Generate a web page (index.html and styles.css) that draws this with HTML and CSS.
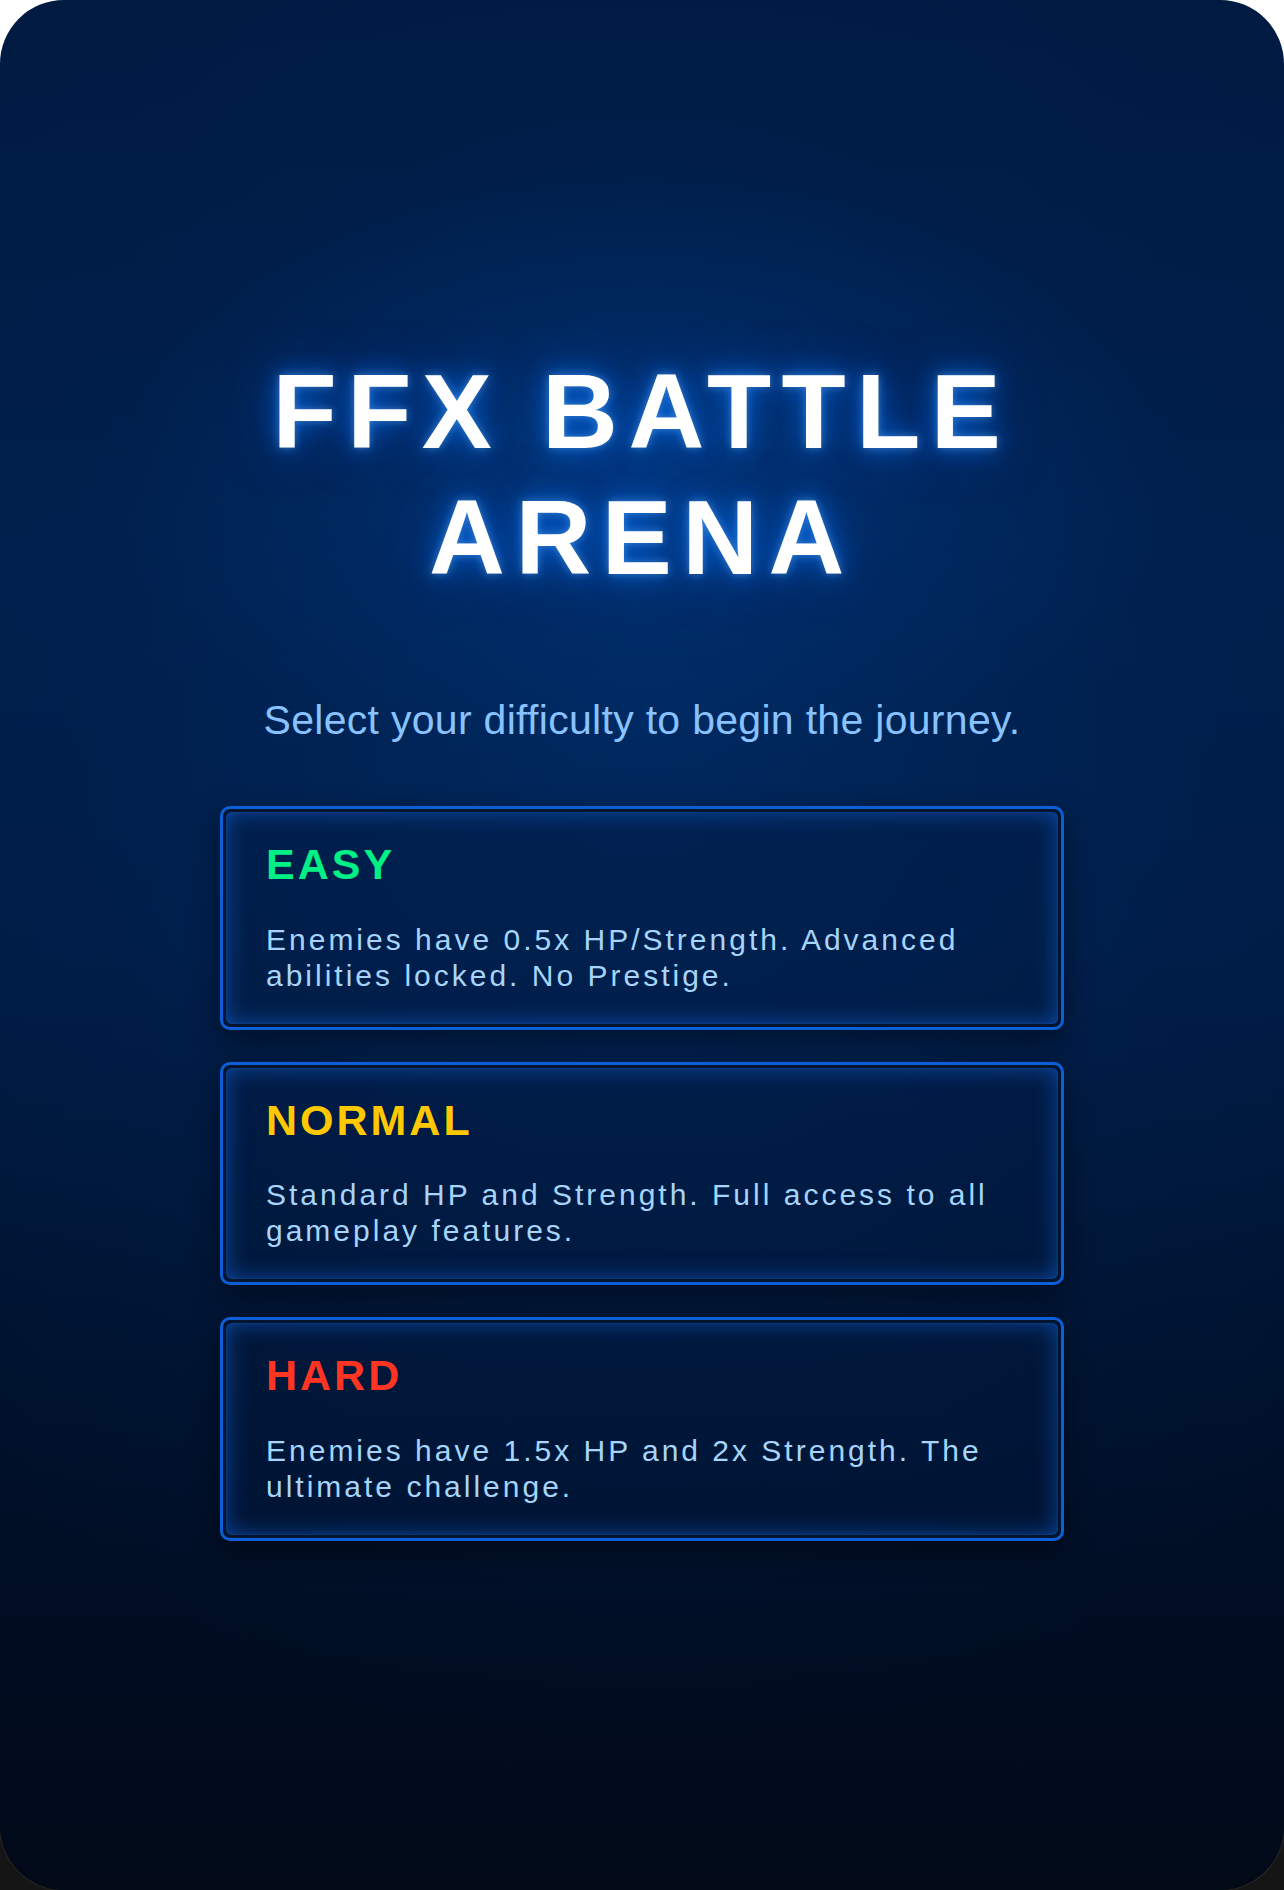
FILE: index.html
```html
<!DOCTYPE html>
<html lang="en">
<head>
<meta charset="utf-8">
<title>FFX Battle Arena</title>
<link rel="stylesheet" href="styles.css">
</head>
<body>
<main class="screen">
  <h1 class="title">FFX BATTLE ARENA</h1>
  <p class="subtitle">Select your difficulty to begin the journey.</p>
  <div class="cards">
    <button class="card" type="button">
      <span class="card-inner">
        <span class="card-title easy">EASY</span>
        <span class="card-desc">Enemies have 0.5x HP/Strength. Advanced abilities locked. No Prestige.</span>
      </span>
    </button>
    <button class="card" type="button">
      <span class="card-inner">
        <span class="card-title normal">NORMAL</span>
        <span class="card-desc">Standard HP and Strength. Full access to all gameplay features.</span>
      </span>
    </button>
    <button class="card" type="button">
      <span class="card-inner">
        <span class="card-title hard">HARD</span>
        <span class="card-desc">Enemies have 1.5x HP and 2x Strength. The ultimate challenge.</span>
      </span>
    </button>
  </div>
</main>
</body>
</html>
```

FILE: styles.css
```css
html {
  background: linear-gradient(to bottom, #ffffff 0%, #ffffff 50%, #151515 50%, #151515 100%);
  min-height: 100%;
}

body {
  margin: 0;
  font-family: "Liberation Sans", Arial, sans-serif;
}

.screen {
  box-sizing: border-box;
  min-height: 100vh;
  border-radius: 64px;
  padding: 0 40px;
  display: flex;
  flex-direction: column;
  align-items: center;
  justify-content: center;
  box-shadow: 0 0 0 1px rgba(255, 255, 255, 0.09);
  background:
    radial-gradient(ellipse 42% 16% at 50% 25%, rgba(0, 75, 160, 0.5) 0%, rgba(0, 60, 140, 0.2) 55%, rgba(0, 40, 100, 0) 100%),
    radial-gradient(ellipse 75% 55% at 50% 38%, rgba(0, 45, 105, 0.7) 0%, rgba(0, 35, 85, 0.25) 60%, rgba(0, 20, 50, 0) 100%),
    linear-gradient(to bottom, #001a40 0%, #001f4b 30%, #001c45 50%, #00132f 70%, #000d22 85%, #020a18 100%);
}

.title {
  max-width: 900px;
  margin: 0;
  color: #ffffff;
  font-size: 105px;
  line-height: 1.2;
  font-weight: 700;
  letter-spacing: 0.1em;
  text-align: center;
  text-shadow:
    0 0 8px rgba(120, 190, 255, 0.45),
    0 0 24px rgba(0, 115, 255, 0.7),
    0 0 50px rgba(0, 90, 220, 0.5);
}

.subtitle {
  margin: 96px 0 62px;
  color: #88c2ff;
  font-size: 41px;
  letter-spacing: 0.3px;
  text-align: center;
}

.cards {
  display: flex;
  flex-direction: column;
  gap: 32px;
  width: 844px;
}

.card {
  display: block;
  box-sizing: border-box;
  width: 100%;
  margin: 0;
  padding: 3px;
  border: 3px solid #0c5fd6;
  border-radius: 10px;
  background: rgba(0, 10, 30, 0.25);
  font: inherit;
  text-align: left;
  cursor: pointer;
  box-shadow:
    inset 0 0 0 3px #03142f,
    0 10px 30px rgba(0, 0, 0, 0.45);
}

.card-inner {
  display: block;
  padding: 28px 40px 30px;
  border-radius: 6px;
  background: rgba(0, 40, 100, 0.22);
  box-shadow:
    inset 0 0 22px rgba(20, 110, 235, 0.55),
    inset 0 0 3px rgba(40, 130, 255, 0.3);
}

.card-title {
  display: block;
  font-size: 43px;
  font-weight: 700;
  letter-spacing: 3px;
  line-height: 1.15;
  margin-bottom: 32px;
}

.easy { color: #00f086; }
.normal { color: #ffc800; }
.hard { color: #ff3423; }

.card-desc {
  display: block;
  color: #a6d4fa;
  font-size: 30px;
  line-height: 36px;
  letter-spacing: 3px;
}
```
